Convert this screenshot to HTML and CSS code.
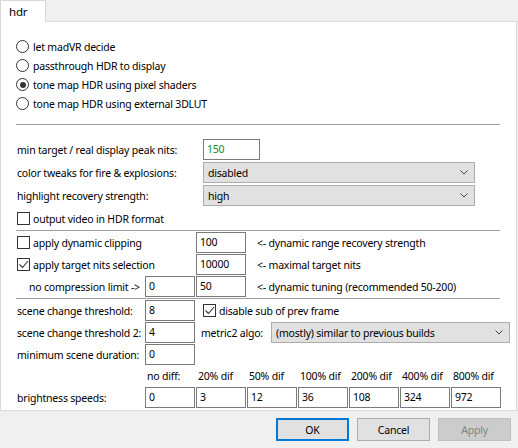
FILE: index.html
```html
<!DOCTYPE html>
<html>

<head>
    <meta charset="utf-8">
    <title>hdr</title>
    <link rel="stylesheet" href="styles.css">
</head>

<body>
    <div id="dialog">
        <div class="tabs">
            <div class="tab">hdr</div>
        </div>
        <div class="page">
            <div class="radios">
                <div class="opt"><span class="radio"></span>let madVR decide</div>
                <div class="opt"><span class="radio"></span>passthrough HDR to display</div>
                <div class="opt"><span class="radio on"></span>tone map HDR using pixel shaders</div>
                <div class="opt"><span class="radio"></span>tone map HDR using external 3DLUT</div>
            </div>
            <div class="sep first"></div>

            <div class="sect tone">
                <div class="row"><span class="lbl">min target / real display peak nits:</span><span class="field nits">150</span></div>
                <div class="row"><span class="lbl">color tweaks for fire &amp; explosions:</span>
                    <span class="combo">disabled<svg width="8" height="5"><polyline points="0.5,0.5 4,4 7.5,0.5" /></svg></span>
                </div>
                <div class="row"><span class="lbl">highlight recovery strength:</span>
                    <span class="combo">high<svg width="8" height="5"><polyline points="0.5,0.5 4,4 7.5,0.5" /></svg></span>
                </div>
                <div class="row"><span class="check"></span>output video in HDR format</div>
            </div>
            <div class="sep"></div>

            <div class="sect dyn">
                <div class="row">
                    <span class="cblbl"><span class="check"></span>apply dynamic clipping</span>
                    <span class="field">100</span>
                    <span class="hint">&lt;- dynamic range recovery strength</span>
                </div>
                <div class="row">
                    <span class="cblbl"><span class="check"><svg width="11" height="11"><polyline points="1.5,5.5 4.5,8.5 10,2" /></svg></span>apply target nits selection</span>
                    <span class="field">10000</span>
                    <span class="hint">&lt;- maximal target nits</span>
                </div>
                <div class="row">
                    <span class="indent">no compression limit -&gt;</span>
                    <span class="field">0</span>
                    <span class="field next">50</span>
                    <span class="hint">&lt;- dynamic tuning (recommended 50-200)</span>
                </div>
            </div>
            <div class="sep"></div>

            <div class="sect scene">
                <div class="row">
                    <span class="lbl2">scene change threshold:</span>
                    <span class="field">8</span>
                    <span class="check sub"><svg width="11" height="11"><polyline points="1.5,5.5 4.5,8.5 10,2" /></svg></span>disable sub of prev frame
                </div>
                <div class="row">
                    <span class="lbl2">scene change threshold 2:</span>
                    <span class="field">4</span>
                    <span class="algo">metric2 algo:</span>
                    <span class="combo wide">(mostly) similar to previous builds<svg width="8" height="5"><polyline points="0.5,0.5 4,4 7.5,0.5" /></svg></span>
                </div>
                <div class="row">
                    <span class="lbl2">minimum scene duration:</span>
                    <span class="field">0</span>
                </div>
                <div class="heads">
                    <span>no diff:</span><span>20% dif</span><span>50% dif</span><span>100% dif</span><span>200% dif</span><span>400% dif</span><span>800% dif</span>
                </div>
                <div class="row speeds">
                    <span class="lbl2">brightness speeds:</span>
                    <span class="field">0</span>
                    <span class="field">3</span>
                    <span class="field">12</span>
                    <span class="field">36</span>
                    <span class="field">108</span>
                    <span class="field">324</span>
                    <span class="field">972</span>
                </div>
            </div>
        </div>

        <div class="buttons">
            <button class="default">OK</button>
            <button>Cancel</button>
            <button disabled>Apply</button>
        </div>
    </div>
</body>

</html>
```

FILE: styles.css
```css
* {
    box-sizing: border-box;
    margin: 0px;
    padding: 0px;
}

body {
    width: 518px;
    height: 448px;
    overflow: hidden;
    background: #f0f0f0;
    font-family: "Noto Sans", sans-serif;
    font-size: 10.5px;
    letter-spacing: -0.2px;
    color: #000;
}

.tabs {
    height: 21px;
    display: flex;
}

.tab {
    width: 46px;
    height: 22px;
    padding: 3px 0px 0px 8px;
    background: #fff;
    border: 1px solid #d9d9d9;
    border-bottom: none;
    position: relative;
    z-index: 1;
    font-size: 11.5px;
}

.page {
    width: 517px;
    height: 390px;
    padding-left: 16px;
    background: #fff;
    border: 1px solid #d9d9d9;
}

/* radio group */
.radios {
    padding-top: 15px;
}

.opt {
    height: 19px;
    display: flex;
    align-items: center;
}

.radio {
    width: 13px;
    height: 13px;
    margin: 0px 4px 0px -1px;
    border: 1px solid #333;
    border-radius: 50%;
    display: flex;
    justify-content: center;
    align-items: center;
}

.radio.on::after {
    content: "";
    width: 6px;
    height: 6px;
    border-radius: 50%;
    background: #333;
}

.sep {
    width: 484px;
    height: 1px;
    margin: 1px 0px 1px -1px;
    background: #a0a0a0;
}

.sep.first {
    margin: 11px 0px 14px -1px;
}

/* rows */
.sect {
    display: flex;
    flex-direction: column;
    gap: 1px;
}

.sect.tone {
    gap: 2px;
}

.row {
    height: 21px;
    display: flex;
    align-items: center;
    white-space: nowrap;
}

.lbl {
    width: 186px;
}

.lbl2 {
    width: 128px;
}

.cblbl {
    width: 179px;
    display: flex;
    align-items: center;
}

.indent {
    width: 128px;
    padding-left: 12px;
}

.check {
    width: 13px;
    height: 13px;
    margin-right: 3px;
    border: 1px solid #333;
    display: flex;
    justify-content: center;
    align-items: center;
}

.check svg polyline {
    fill: none;
    stroke: #333;
    stroke-width: 1.1;
}

.check.sub {
    margin-left: 8px;
}

.field {
    width: 50px;
    height: 21px;
    padding-left: 3px;
    line-height: 19px;
    border: 1px solid #7a7a7a;
    background: #fff;
}

.field.next {
    margin-left: 1px;
}

.field.nits {
    width: 57px;
    color: #168a16;
}

.hint {
    margin-left: 11px;
}

.combo {
    width: 272px;
    height: 21px;
    padding: 0px 6px 0px 4px;
    display: flex;
    justify-content: space-between;
    align-items: center;
    background: #e1e1e1;
    border: 1px solid #adadad;
}

.combo svg polyline {
    fill: none;
    stroke: #444;
    stroke-width: 1;
}

.combo.wide {
    width: 239px;
}

.algo {
    width: 70px;
    margin-left: 6px;
}

.heads {
    height: 20px;
    display: flex;
    align-items: center;
    padding-left: 128px;
}

.heads span {
    width: 51px;
    padding-left: 2px;
}

.speeds .field {
    margin-right: 1px;
}

/* dialog buttons */
.buttons {
    display: flex;
    justify-content: flex-end;
    gap: 8px;
    margin-top: 7px;
    padding-right: 7px;
}

button {
    width: 73px;
    height: 23px;
    font-family: "Noto Sans", sans-serif;
    font-size: 10.5px;
    letter-spacing: -0.2px;
    color: #000;
    background: #e1e1e1;
    border: 1px solid #adadad;
}

button.default {
    border-color: #0078d7;
    box-shadow: inset 0px 0px 0px 1px #0078d7;
}

button:disabled {
    color: #838383;
    background: #cccccc;
    border-color: #bfbfbf;
}
```
